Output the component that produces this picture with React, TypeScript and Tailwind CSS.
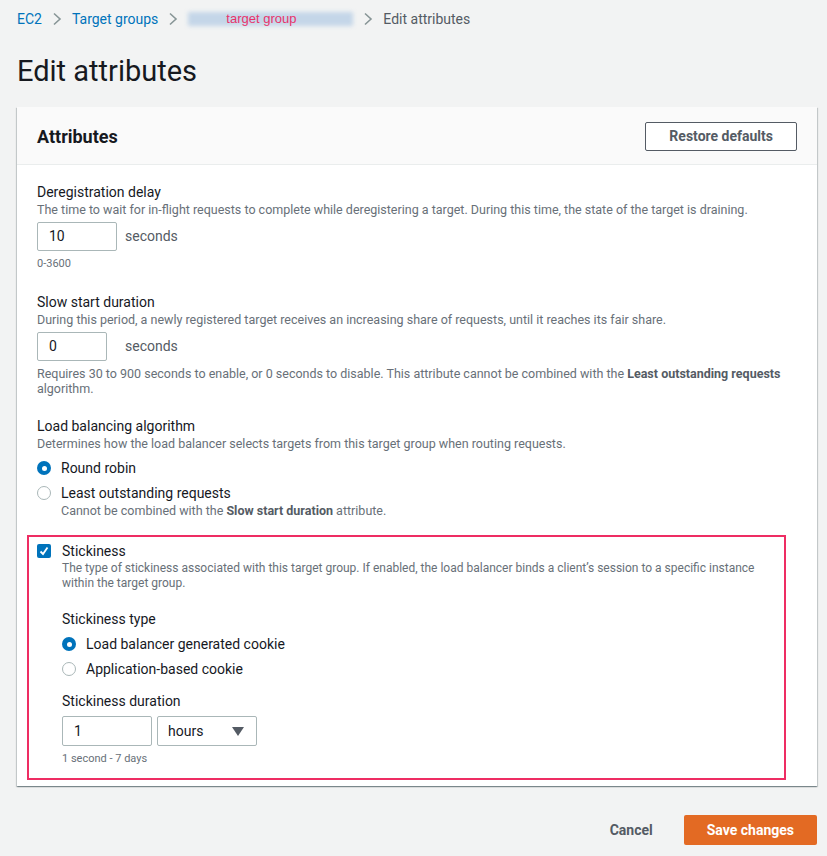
import React from 'react';

const Chevron = () => (
  <svg width="10" height="14" viewBox="0 0 10 14" className="mx-[10px]">
    <path d="M2 1.5 L8 7 L2 12.5" fill="none" stroke="#879596" strokeWidth="1.6" />
  </svg>
);

const Radio = ({ checked }: { checked?: boolean }) =>
  checked ? (
    <span className="w-[14px] h-[14px] rounded-full bg-[#0073bb] flex items-center justify-center shrink-0">
      <span className="w-[5px] h-[5px] rounded-full bg-white" />
    </span>
  ) : (
    <span className="w-[14px] h-[14px] rounded-full border border-[#aab7b8] bg-white shrink-0" />
  );

const App: React.FC = () => {
  return (
    <div className="min-h-[856px] bg-[#f2f3f3] text-[#16191f] font-[Roboto,'Liberation_Sans',sans-serif]">
      {/* Breadcrumbs */}
      <div className="flex items-center h-[38px] pl-[17px] text-[14px]">
        <span className="text-[#0073bb]">EC2</span>
        <Chevron />
        <span className="text-[#0073bb]">Target groups</span>
        <Chevron />
        <span className="relative inline-flex items-center w-[165px] h-[14px]">
          <span className="absolute inset-0 bg-[#b9cfe6] blur-[2px] opacity-80" />
          <span className="relative ml-[38px] text-[#e8336b] text-[13px] font-['Liberation_Sans',Arial,sans-serif]">target group</span>
        </span>
        <Chevron />
        <span className="text-[#545b64]">Edit attributes</span>
      </div>

      <h1 className="pl-[17px] pt-[15px] pb-[18px] text-[29px] leading-[36px]">Edit attributes</h1>

      {/* Panel */}
      <div className="ml-[17px] mr-[10px] bg-white shadow-[0_1px_1px_0_rgba(0,28,36,0.3),1px_1px_1px_0_rgba(0,28,36,0.15),-1px_1px_1px_0_rgba(0,28,36,0.15)]">
        <div className="flex items-center justify-between h-[58px] pt-[2px] px-[20px] bg-[#fafafa] border-b border-[#eaeded]">
          <h2 className="text-[18px] font-bold">Attributes</h2>
          <button className="h-[29px] px-[23px] border border-[#545b64] rounded-[2px] bg-white text-[14px] font-bold text-[#545b64]">
            Restore defaults
          </button>
        </div>

        <div className="px-[20px] pt-[17px] pb-[6px]">
          {/* Deregistration delay */}
          <div className="text-[14px] leading-[20px]">Deregistration delay</div>
          <div className="text-[12.5px] leading-[16px] text-[#687078]">
            The time to wait for in-flight requests to complete while deregistering a target. During this time, the state of the target is draining.
          </div>
          <div className="flex items-center mt-[4px]">
            <div className="w-[80px] h-[29px] border border-[#aab7b8] rounded-[2px] flex items-center px-[11px] text-[14px]">10</div>
            <span className="ml-[8px] text-[14px] text-[#545b64]">seconds</span>
          </div>
          <div className="mt-[6px] text-[11px] leading-[14px] text-[#687078]">0-3600</div>

          {/* Slow start */}
          <div className="mt-[21px] text-[14px] leading-[20px]">Slow start duration</div>
          <div className="text-[12.5px] leading-[16px] text-[#687078]">
            During this period, a newly registered target receives an increasing share of requests, until it reaches its fair share.
          </div>
          <div className="flex items-center mt-[4px]">
            <div className="w-[70px] h-[29px] border border-[#aab7b8] rounded-[2px] flex items-center px-[11px] text-[14px]">0</div>
            <span className="ml-[18px] text-[14px] text-[#545b64]">seconds</span>
          </div>
          <div className="mt-[5px] text-[12.5px] leading-[15px] text-[#687078]">
            Requires 30 to 900 seconds to enable, or 0 seconds to disable. This attribute cannot be combined with the{' '}
            <b className="text-[#545b64]">Least outstanding requests</b> algorithm.
          </div>

          {/* Load balancing algorithm */}
          <div className="mt-[20px] text-[14px] leading-[20px]">Load balancing algorithm</div>
          <div className="text-[12.5px] leading-[16px] text-[#687078]">
            Determines how the load balancer selects targets from this target group when routing requests.
          </div>
          <div className="flex items-center gap-[10px] mt-[6px] h-[20px]">
            <Radio checked />
            <span className="text-[14px]">Round robin</span>
          </div>
          <div className="flex items-center gap-[10px] mt-[5px] h-[20px]">
            <Radio />
            <span className="text-[14px]">Least outstanding requests</span>
          </div>
          <div className="pl-[24px] text-[12.5px] leading-[16px] text-[#687078]">
            Cannot be combined with the <b className="text-[#545b64]">Slow start duration</b> attribute.
          </div>

          {/* Stickiness */}
          <div className="mt-[16px] -ml-[10px] mr-[11px] border-2 border-[#ee2d63] px-[8px] pt-[5px] pb-[12px]">
            <div className="flex items-center gap-[11px] h-[18px]">
              <span className="w-[14px] h-[14px] rounded-[2px] bg-[#0073bb] flex items-center justify-center">
                <svg width="10" height="10" viewBox="0 0 10 10">
                  <path d="M1.5 5.5 L4 8 L8.5 1.5" fill="none" stroke="white" strokeWidth="1.8" />
                </svg>
              </span>
              <span className="text-[14px]">Stickiness</span>
            </div>
            <div className="pl-[25px] text-[12px] leading-[15px] text-[#687078] mt-[1px]">
              The type of stickiness associated with this target group. If enabled, the load balancer binds a client’s session to a specific instance within the target group.
            </div>
            <div className="pl-[25px]">
              <div className="mt-[18px] text-[14px] leading-[20px]">Stickiness type</div>
              <div className="flex items-center gap-[10px] mt-[5px] h-[20px]">
                <Radio checked />
                <span className="text-[14px]">Load balancer generated cookie</span>
              </div>
              <div className="flex items-center gap-[10px] mt-[5px] h-[20px]">
                <Radio />
                <span className="text-[14px]">Application-based cookie</span>
              </div>
              <div className="mt-[12px] text-[14px] leading-[20px]">Stickiness duration</div>
              <div className="flex items-center gap-[5px] mt-[5px]">
                <div className="w-[90px] h-[30px] border border-[#aab7b8] rounded-[2px] flex items-center px-[11px] text-[14px]">1</div>
                <div className="w-[100px] h-[30px] border border-[#aab7b8] rounded-[2px] flex items-center justify-between pl-[10px] pr-[12px] text-[14px]">
                  <span>hours</span>
                  <svg width="12" height="9" viewBox="0 0 12 9">
                    <path d="M0 0 L12 0 L6 9 Z" fill="#545b64" />
                  </svg>
                </div>
              </div>
              <div className="mt-[6px] text-[11px] leading-[14px] text-[#687078]">1 second - 7 days</div>
            </div>
          </div>
        </div>
      </div>

      {/* Footer */}
      <div className="flex items-center justify-end gap-[11px] px-[10px] mt-[29px]">
        <button className="px-[20px] h-[30px] text-[14px] font-bold text-[#545b64]">Cancel</button>
        <button className="px-[23px] h-[30px] rounded-[2px] bg-[#e36a23] text-[14px] font-bold text-white">Save changes</button>
      </div>
    </div>
  );
};

export default App;
